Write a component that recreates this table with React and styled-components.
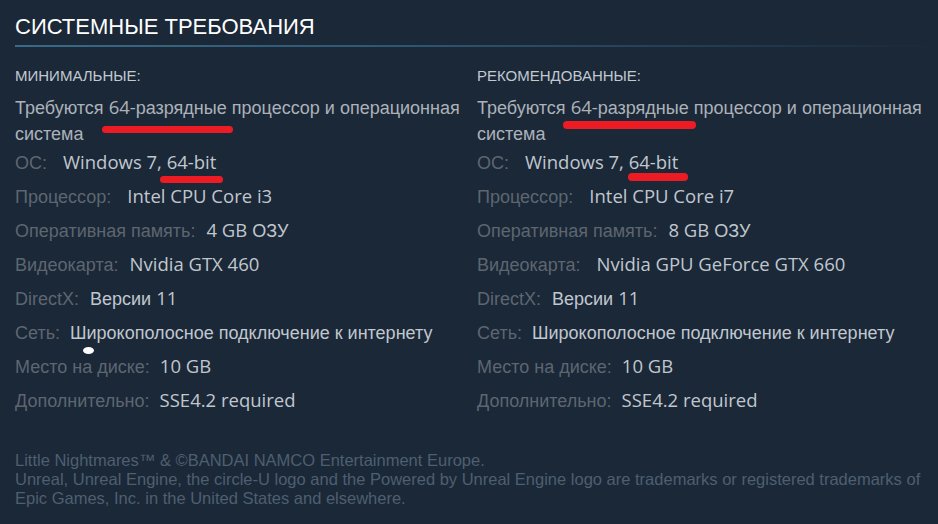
import React from "react";
import styled, { createGlobalStyle } from "styled-components";

const GlobalStyle = createGlobalStyle`
  html, body {
    margin: 0;
    padding: 0;
    background: #1b2838;
  }
  body {
    font-family: "Liberation Sans", Arial, sans-serif;
  }
`;

const Page = styled.div`
  position: relative;
  width: 938px;
  height: 524px;
  overflow: hidden;
  background: #1b2838;
  padding: 0 0 0 15px;
  box-sizing: border-box;
`;

const Heading = styled.h2`
  margin: 0;
  padding: 14px 0 5px;
  font-size: 22px;
  line-height: 26px;
  font-weight: normal;
  color: #ffffff;
`;

const Rule = styled.div`
  height: 2px;
  background: linear-gradient(to right, #3a6a88 0%, #2f5874 40%, rgba(27, 40, 56, 0) 100%);
`;

const Columns = styled.div`
  display: grid;
  grid-template-columns: 455px 1fr;
  column-gap: 7px;
  margin-top: 20px;
`;

const Column = styled.div`
  display: flex;
  flex-direction: column;
`;

const Bucket = styled.div`
  font-size: 15px;
  line-height: 18px;
  color: #c1c9d1;
  text-transform: uppercase;
  margin-bottom: 10px;
`;

const List = styled.ul`
  list-style: none;
  margin: 0;
  padding: 0;
  display: flex;
  flex-direction: column;
  gap: 8px;
  font-size: 18px;
  line-height: 26px;
`;

const Note = styled.li`
  color: #acb2b8;
  margin-bottom: -5px;
  white-space: nowrap;
`;

const Row = styled.li`
  height: 26px;
  color: #acb2b8;
  white-space: nowrap;
`;

const Label = styled.span`
  color: #5d6670;
  margin-right: ${(p) => p.$gap || 10}px;
`;

const Value = styled.span`
  color: #c0c7ce;
`;

const Lat = styled.span`
  font-family: "Open Sans", "Liberation Sans", sans-serif;
  font-size: 18.5px;
  line-height: 1;
`;

const Legal = styled.div`
  margin-top: 37px;
  font-size: 16.5px;
  line-height: 19px;
  color: #4e5f6f;
  padding-right: 8px;
`;

const Mark = styled.div`
  position: absolute;
  background: #ed1c24;
  border-radius: 4px;
`;

const Dot = styled.div`
  position: absolute;
  left: 83px;
  top: 347px;
  width: 11px;
  height: 7px;
  border-radius: 50%;
  background: #ffffff;
`;

const mix = (text) =>
  text
    .split(/([A-Za-z0-9][A-Za-z0-9 .,\-]*[A-Za-z0-9\-]|[A-Za-z0-9])/)
    .map((part, i) =>
      /^[A-Za-z0-9]/.test(part) ? <Lat key={i}>{part}</Lat> : part
    );

const minimum = [
  ["ОС:", "Windows 7, 64-bit", 16],
  ["Процессор:", "Intel CPU Core i3", 16],
  ["Оперативная память:", "4 GB ОЗУ", 11],
  ["Видеокарта:", "Nvidia GTX 460", 11],
  ["DirectX:", "Версии 11", 11],
  ["Сеть:", "Широкополосное подключение к интернету"],
  ["Место на диске:", "10 GB"],
  ["Дополнительно:", "SSE4.2 required"],
];

const recommended = [
  ["ОС:", "Windows 7, 64-bit", 16],
  ["Процессор:", "Intel CPU Core i7", 16],
  ["Оперативная память:", "8 GB ОЗУ", 11],
  ["Видеокарта:", "Nvidia GPU GeForce GTX 660", 16],
  ["DirectX:", "Версии 11", 11],
  ["Сеть:", "Широкополосное подключение к интернету"],
  ["Место на диске:", "10 GB"],
  ["Дополнительно:", "SSE4.2 required"],
];

const Requirements = ({ title, rows }) => (
  <Column>
    <Bucket>{title}</Bucket>
    <List>
      <Note>
        {mix("Требуются 64-разрядные процессор и операционная")}
        <br />
        система
      </Note>
      {rows.map(([label, value, gap]) => (
        <Row key={label}>
          <Label $gap={gap}>{label}</Label>
          <Value>{mix(value)}</Value>
        </Row>
      ))}
    </List>
  </Column>
);

export default function App() {
  return (
    <>
      <GlobalStyle />
      <Page>
        <Heading>СИСТЕМНЫЕ ТРЕБОВАНИЯ</Heading>
        <Rule />
        <Columns>
          <Requirements title="Минимальные:" rows={minimum} />
          <Requirements title="Рекомендованные:" rows={recommended} />
        </Columns>
        <Legal>
          Little Nightmares™ &amp; ©BANDAI NAMCO Entertainment Europe.
          <br />
          Unreal, Unreal Engine, the circle-U logo and the Powered by Unreal Engine logo are
          trademarks or registered trademarks of Epic Games, Inc. in the United States and
          elsewhere.
        </Legal>

        <Mark style={{ left: 102, top: 126, width: 131, height: 7 }} />
        <Mark style={{ left: 160, top: 176, width: 63, height: 7 }} />
        <Mark style={{ left: 563, top: 121, width: 133, height: 8 }} />
        <Mark style={{ left: 628, top: 173, width: 60, height: 8 }} />
        <Dot />
      </Page>
    </>
  );
}
